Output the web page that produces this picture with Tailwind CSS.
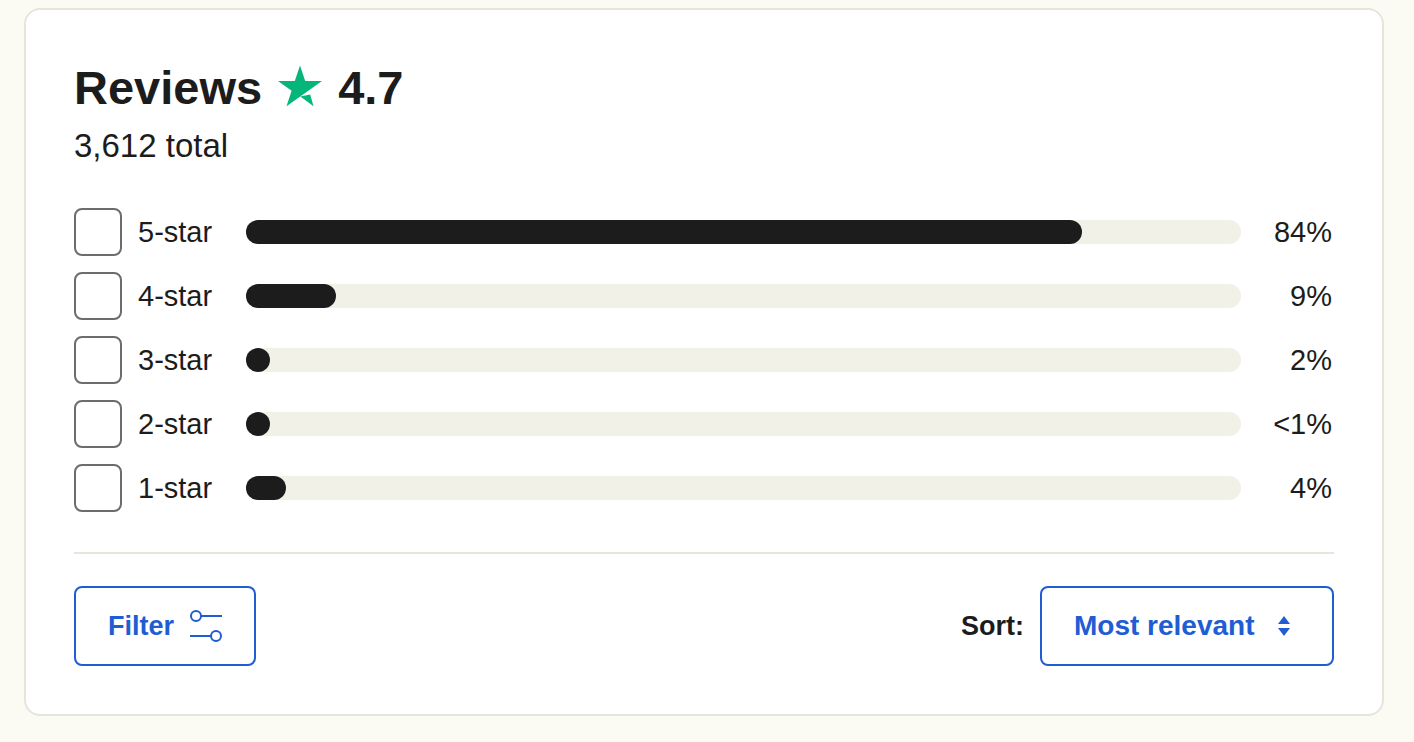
<!DOCTYPE html>
<html lang="en">
<head>
    <meta charset="UTF-8">
    <meta name="viewport" content="width=device-width, initial-scale=1.0">
    <title>Reviews</title>
    <script src="https://cdn.jsdelivr.net/npm/@tailwindcss/browser@4"></script>
</head>
<body class="bg-[#fcfbf3] min-h-screen pt-2 pb-6 pl-6 pr-[30px] font-['Liberation_Sans',Arial,sans-serif] text-[#1c1c1c]">
    <section class="bg-white border-2 border-[#e5e5dd] rounded-2xl p-12">
        <!-- Heading -->
        <h1 class="flex items-center gap-4 text-[47px] leading-[60px] font-bold">
            <span>Reviews</span>
            <svg class="w-11 h-[42px] shrink-0 mb-1" viewBox="0 0 44 42" fill="#04b67a" aria-hidden="true">
                <path d="M22 .5 27.2 16H44L8.5 41.3 13.6 25.7 0 16H16.8Z" />
                <path d="M22.4 31.6 32.2 29.4 35.5 41.3Z" />
            </svg>
            <span>4.7</span>
        </h1>
        <p class="mt-1.5 text-[33px] leading-11">3,612 total</p>

        <!-- Rating breakdown -->
        <div class="mt-10 space-y-4 text-[29px] leading-12">
            <div class="flex items-center">
                <input type="checkbox" id="star5" class="appearance-none size-12 shrink-0 border-2 border-[#6c6c6c] rounded-lg checked:bg-[#205cd4]">
                <label for="star5" class="ml-4 w-[76px] shrink-0">5-star</label>
                <div class="mx-8 h-6 flex-1 rounded-full bg-[#f1f1e8]">
                    <div class="h-6 min-w-6 rounded-full bg-[#1c1c1c]" style="width: 84%"></div>
                </div>
                <span class="w-[61px] shrink-0 pr-0.5 text-right">84%</span>
            </div>
            <div class="flex items-center">
                <input type="checkbox" id="star4" class="appearance-none size-12 shrink-0 border-2 border-[#6c6c6c] rounded-lg checked:bg-[#205cd4]">
                <label for="star4" class="ml-4 w-[76px] shrink-0">4-star</label>
                <div class="mx-8 h-6 flex-1 rounded-full bg-[#f1f1e8]">
                    <div class="h-6 min-w-6 rounded-full bg-[#1c1c1c]" style="width: 9%"></div>
                </div>
                <span class="w-[61px] shrink-0 pr-0.5 text-right">9%</span>
            </div>
            <div class="flex items-center">
                <input type="checkbox" id="star3" class="appearance-none size-12 shrink-0 border-2 border-[#6c6c6c] rounded-lg checked:bg-[#205cd4]">
                <label for="star3" class="ml-4 w-[76px] shrink-0">3-star</label>
                <div class="mx-8 h-6 flex-1 rounded-full bg-[#f1f1e8]">
                    <div class="h-6 min-w-6 rounded-full bg-[#1c1c1c]" style="width: 2%"></div>
                </div>
                <span class="w-[61px] shrink-0 pr-0.5 text-right">2%</span>
            </div>
            <div class="flex items-center">
                <input type="checkbox" id="star2" class="appearance-none size-12 shrink-0 border-2 border-[#6c6c6c] rounded-lg checked:bg-[#205cd4]">
                <label for="star2" class="ml-4 w-[76px] shrink-0">2-star</label>
                <div class="mx-8 h-6 flex-1 rounded-full bg-[#f1f1e8]">
                    <div class="h-6 min-w-6 rounded-full bg-[#1c1c1c]" style="width: 1%"></div>
                </div>
                <span class="w-[61px] shrink-0 pr-0.5 text-right">&lt;1%</span>
            </div>
            <div class="flex items-center">
                <input type="checkbox" id="star1" class="appearance-none size-12 shrink-0 border-2 border-[#6c6c6c] rounded-lg checked:bg-[#205cd4]">
                <label for="star1" class="ml-4 w-[76px] shrink-0">1-star</label>
                <div class="mx-8 h-6 flex-1 rounded-full bg-[#f1f1e8]">
                    <div class="h-6 min-w-6 rounded-full bg-[#1c1c1c]" style="width: 4%"></div>
                </div>
                <span class="w-[61px] shrink-0 pr-0.5 text-right">4%</span>
            </div>
        </div>

        <!-- Filter and sort -->
        <div class="mt-10 pt-8 border-t-2 border-[#e5e5dd] flex items-center justify-between font-bold">
            <button type="button" class="flex items-center gap-4 h-20 px-8 border-2 border-[#205cd4] rounded-lg text-[27px] text-[#205cd4]">
                Filter
                <svg class="size-8" viewBox="0 0 32 32" fill="none" stroke="currentColor" stroke-width="2" aria-hidden="true">
                    <circle cx="6" cy="6" r="5" />
                    <path d="M11 6H32M0 26H21" />
                    <circle cx="26" cy="26" r="5" />
                </svg>
            </button>
            <div class="flex items-center gap-4">
                <label for="sort" class="text-[27px]">Sort:</label>
                <div class="relative">
                    <select id="sort" class="appearance-none block w-[294px] h-20 pl-8 pr-16 border-2 border-[#205cd4] rounded-lg bg-white text-[28px] text-[#205cd4]">
                        <option>Most relevant</option>
                        <option>Most recent</option>
                    </select>
                    <svg class="absolute right-11 top-[30px] w-3 h-5 pointer-events-none" viewBox="0 0 12 20" fill="#205cd4" aria-hidden="true">
                        <path d="M6 0 12 8H0ZM0 12H12L6 20Z" />
                    </svg>
                </div>
            </div>
        </div>
    </section>
</body>
</html>
